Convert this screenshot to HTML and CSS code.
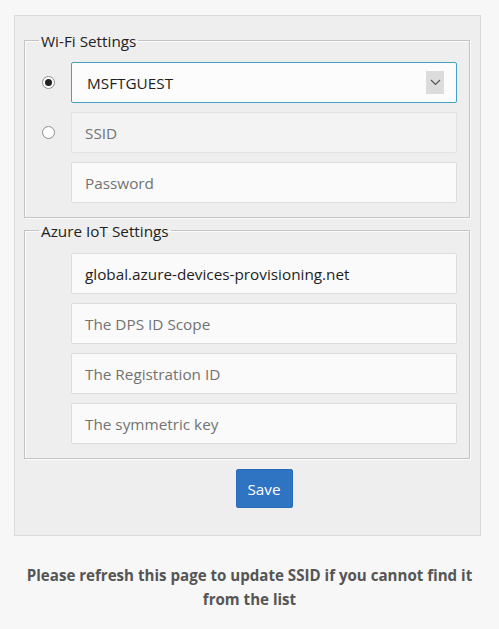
FILE: index.html
```html
<!DOCTYPE html>
<html lang="en">
<head>
<meta charset="utf-8">
<title>Wi-Fi Settings</title>
<link rel="stylesheet" href="styles.css">
</head>
<body>
<form class="panel">
  <fieldset class="group">
    <legend class="group-title">Wi-Fi Settings</legend>
    <div class="row">
      <span class="radio radio-on"></span>
      <div class="select">
        <span class="select-text">MSFTGUEST</span>
        <span class="select-arrow">
          <svg width="11" height="7" viewBox="0 0 11 7"><path d="M1 1 L5.5 5.5 L10 1" fill="none" stroke="#555" stroke-width="1.2"/></svg>
        </span>
      </div>
    </div>
    <div class="row">
      <span class="radio"></span>
      <div class="field field-disabled"><span class="ph">SSID</span></div>
    </div>
    <div class="row">
      <span></span>
      <div class="field"><span class="ph">Password</span></div>
    </div>
  </fieldset>
  <fieldset class="group group-2">
    <legend class="group-title">Azure IoT Settings</legend>
    <div class="row">
      <span></span>
      <div class="field"><span class="val">global.azure-devices-provisioning.net</span></div>
    </div>
    <div class="row">
      <span></span>
      <div class="field"><span class="ph">The DPS ID Scope</span></div>
    </div>
    <div class="row">
      <span></span>
      <div class="field"><span class="ph">The Registration ID</span></div>
    </div>
    <div class="row">
      <span></span>
      <div class="field"><span class="ph">The symmetric key</span></div>
    </div>
  </fieldset>
  <div class="actions">
    <button type="button" class="save">Save</button>
  </div>
</form>
<p class="note">Please refresh this page to update SSID if you cannot find it<br>from the list</p>
</body>
</html>
```
FILE: styles.css
```css
* { box-sizing: border-box; }
body {
  margin: 0;
  background: #f7f7f7;
  font-family: "Open Sans", "Noto Sans", sans-serif;
  color: #222;
}
.panel {
  margin: 15px 18px 0 14px;
  background: #eeeeee;
  border: 1px solid #dadada;
  padding: 14px 10px 27px 9px;
}
.group {
  margin: 0;
  padding: 12px 12px 14px 0;
  border: 1px solid #c4c4c4;
  box-shadow: inset 1px 1px 0 #fbfbfb, 1px 1px 0 #fbfbfb;
}
.group-2 { margin-top: 2px; padding-top: 13px; padding-bottom: 14px; }
.group-title {
  margin-left: 14px;
  padding: 0 2px;
  font-size: 15.3px;
  line-height: 20px;
  color: #222;
  position: relative;
  top: 1px;
}
.row {
  display: grid;
  grid-template-columns: 46px 1fr;
  align-items: center;
  height: 41px;
}
.row + .row { margin-top: 9px; }
.radio {
  width: 13px;
  height: 13px;
  margin-left: 17px;
  border: 1px solid #8c8c8c;
  border-radius: 50%;
  background: #fff;
  display: flex;
  align-items: center;
  justify-content: center;
}
.radio-on::after {
  content: "";
  width: 7px;
  height: 7px;
  border-radius: 50%;
  background: #222;
}
.select {
  height: 41px;
  border: 1px solid #45a0c6;
  border-radius: 2px;
  background: #fcfcfc;
  display: flex;
  align-items: center;
  padding: 0 12px 0 15px;
  font-size: 15.3px;
  color: #1e1e1e;
}
.select-text { flex: 1; }
.select-arrow {
  width: 18px;
  height: 23px;
  background: #dcdcdc;
  display: flex;
  align-items: center;
  justify-content: center;
}
.field {
  height: 41px;
  border: 1px solid #dcdcdc;
  border-radius: 2px;
  background: #fafafa;
  display: flex;
  align-items: center;
  padding: 0 13px;
  font-size: 15.3px;
}
.field-disabled { background: #f3f3f3; border-color: #e2e2e2; }
.ph { color: #727272; }
.val { color: #1e1e1e; }
.actions {
  display: grid;
  grid-template-columns: 46px 1fr 12px;
  margin-top: 10px;
}
.save {
  grid-column: 2;
  justify-self: center;
  width: 57px;
  height: 39px;
  border: 1px solid #2a6cb8;
  border-radius: 2px;
  background: #2f74c3;
  color: #fff;
  font-family: inherit;
  font-size: 15.3px;
  padding: 0;
}
.note {
  margin: 27px 0 0;
  text-align: center;
  font-weight: bold;
  font-size: 15.1px;
  line-height: 24px;
  color: #555;
}
```
